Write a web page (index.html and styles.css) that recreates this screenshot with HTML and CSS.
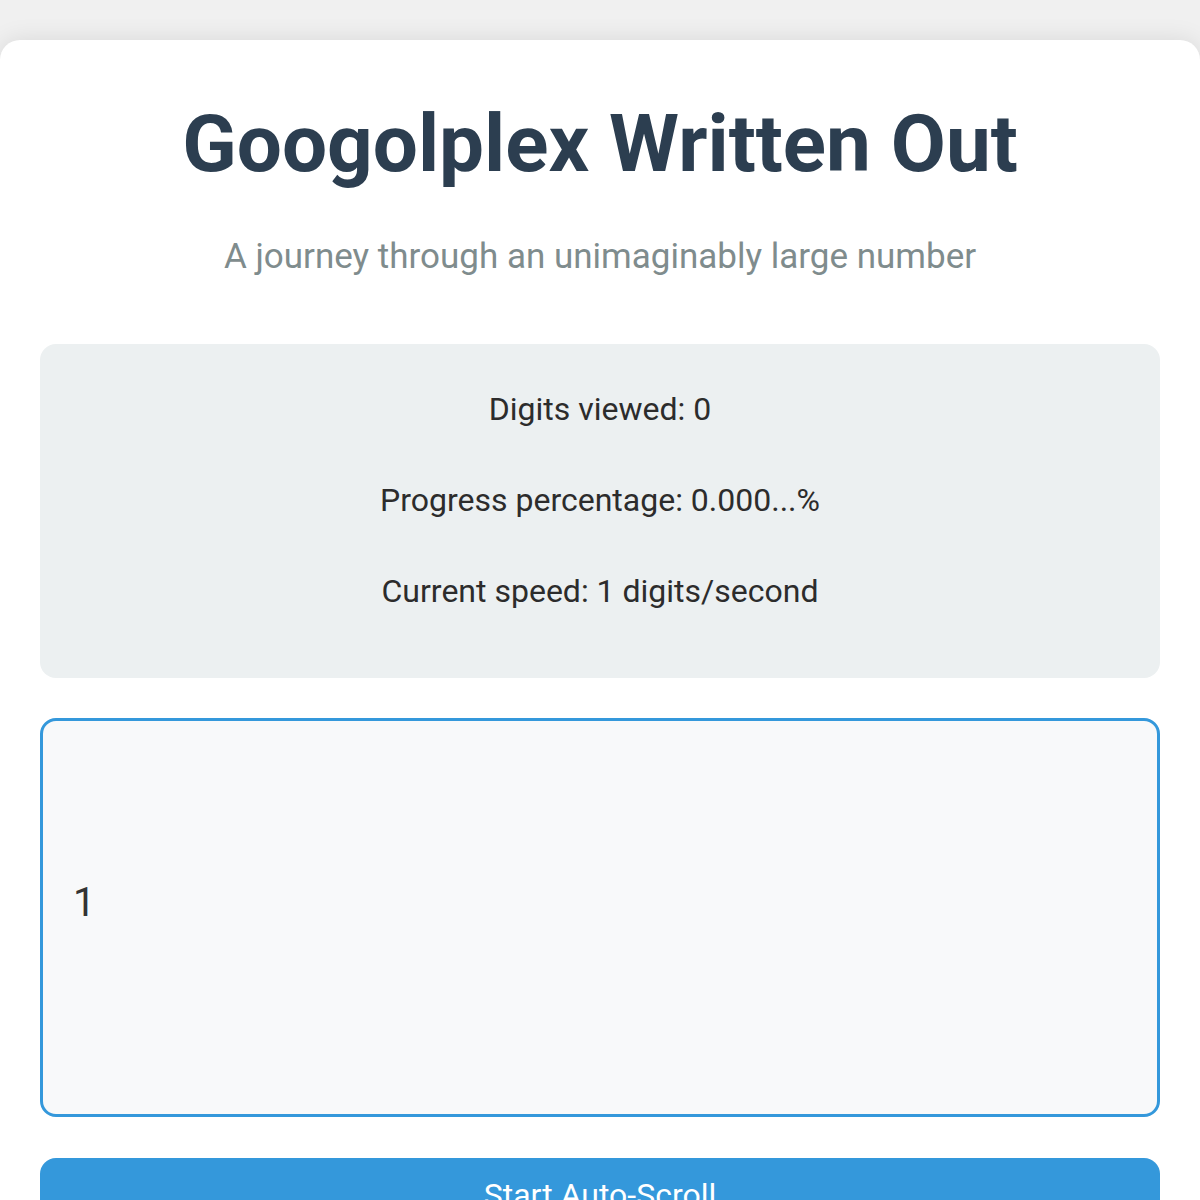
FILE: index.html
```html
<!DOCTYPE html>
<html lang="en">
<head>
<meta charset="utf-8">
<title>Googolplex Written Out</title>
<link rel="stylesheet" href="styles.css">
</head>
<body>
  <main class="card">
    <h1 class="title">Googolplex Written Out</h1>
    <p class="subtitle">A journey through an unimaginably large number</p>
    <section class="stats">
      <div class="stat">Digits viewed: 0</div>
      <div class="stat">Progress percentage: 0.000...%</div>
      <div class="stat">Current speed: 1 digits/second</div>
    </section>
    <section class="display">
      <div class="digits">1</div>
    </section>
    <button class="btn">Start Auto-Scroll</button>
  </main>
</body>
</html>
```
FILE: styles.css
```css
html, body {
  margin: 0;
  padding: 0;
}
body {
  background: #f0f0f0;
  font-family: Roboto, "Noto Sans", "Liberation Sans", sans-serif;
  padding-top: 40px;
}
.card {
  background: #ffffff;
  border-radius: 20px;
  box-shadow: 0 0 24px rgba(0, 0, 0, 0.1);
  padding: 57px 40px 40px;
  display: flex;
  flex-direction: column;
  min-height: 1200px;
  box-sizing: border-box;
}
.title {
  margin: 0;
  text-align: center;
  font-size: 80px;
  font-weight: 700;
  line-height: normal;
  color: #2c3e50;
}
.subtitle {
  margin: 45px 0 0;
  text-align: center;
  font-size: 35px;
  line-height: normal;
  color: #7f8c8d;
}
.stats {
  margin-top: 67px;
  background: #ecf0f1;
  border-radius: 16px;
  padding: 40px 40px 60px;
  display: flex;
  flex-direction: column;
  gap: 40px;
}
.stat {
  text-align: center;
  font-size: 32px;
  line-height: 1.6;
  color: #2c2c2c;
}
.display {
  margin-top: 40px;
  height: 399px;
  box-sizing: border-box;
  border: 3px solid #3498db;
  border-radius: 16px;
  background: #f8f9fa;
  padding: 20px 30px 49px;
  display: flex;
  align-items: center;
}
.digits {
  font-size: 40px;
  line-height: normal;
  color: #333333;
}
.btn {
  margin-top: 41px;
  border: none;
  border-radius: 16px;
  background: #3498db;
  color: #ffffff;
  font-family: Roboto, "Noto Sans", "Liberation Sans", sans-serif;
  font-size: 32px;
  line-height: normal;
  padding: 18px 20px;
  text-align: center;
}
```
